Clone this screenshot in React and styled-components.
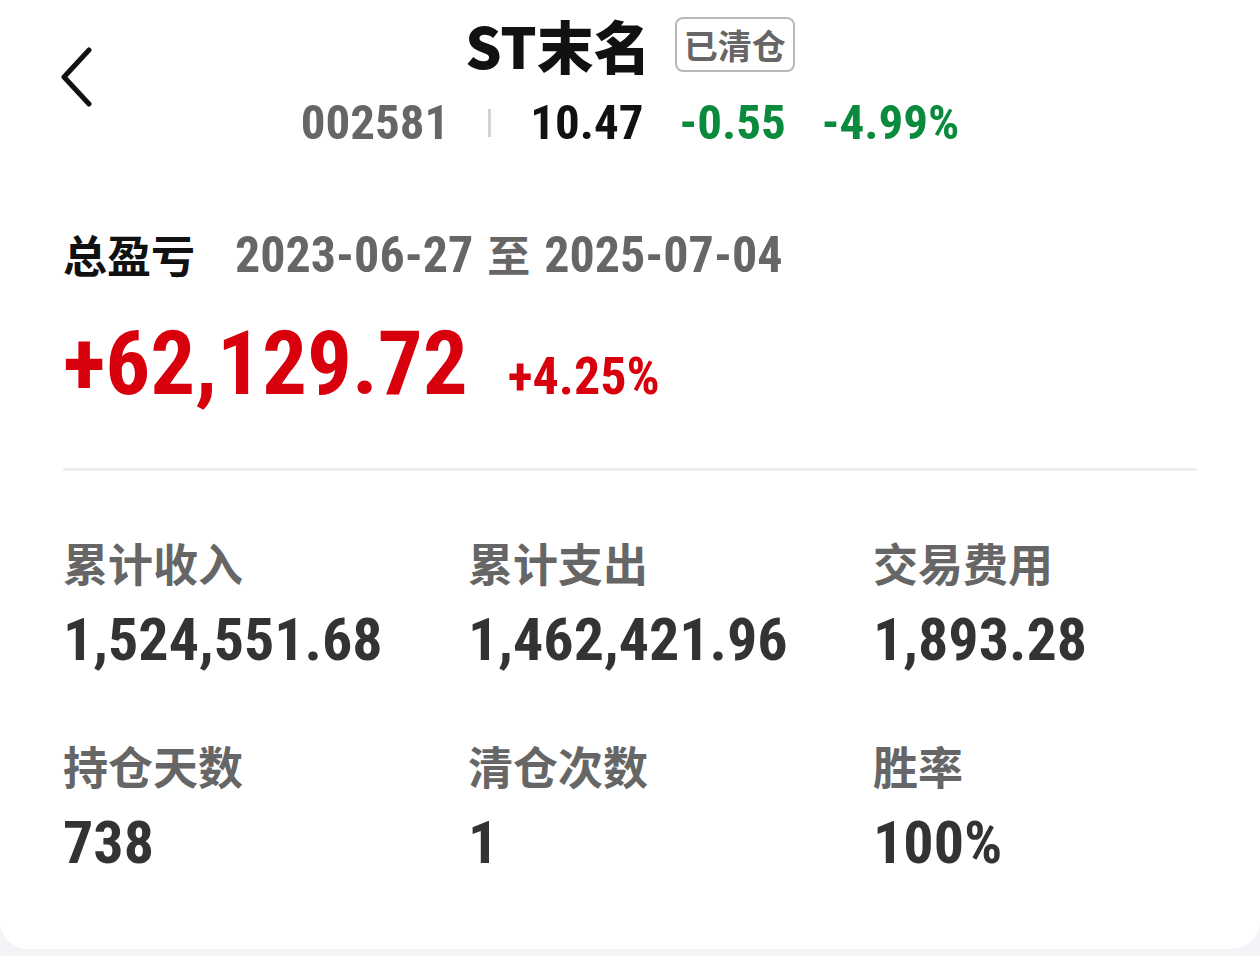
import React from "react";
import styled, { createGlobalStyle } from "styled-components";

const GlobalStyle = createGlobalStyle`
  html, body { margin: 0; padding: 0; background: #f3f4f8; }
  body { font-family: "Noto Sans CJK SC", "Noto Sans", sans-serif; }
`;

const NUM = `"Roboto Condensed", "Open Sans", "Noto Sans CJK SC", sans-serif`;
const CJK = `"Noto Sans CJK SC", "Noto Sans", sans-serif`;

const Page = styled.div`
  width: 1260px;
  height: 956px;
  background: #f3f4f8;
`;

const Card = styled.div`
  background: #ffffff;
  border-radius: 0 0 28px 28px;
  padding: 16px 63px 74px;
`;

const Header = styled.div`
  display: grid;
  grid-template-columns: 1fr auto 1fr;
  align-items: start;
`;

const BackButton = styled.button`
  border: 0;
  background: none;
  padding: 0;
  margin: 31px 0 0 -2px;
  width: 34px;
  height: 60px;
  justify-self: start;
  cursor: pointer;
`;

const TitleBlock = styled.div`
  display: flex;
  flex-direction: column;
  align-items: center;
`;

const TitleRow = styled.div`
  display: flex;
  align-items: center;
  gap: 24px;
  height: 56px;
`;

const Title = styled.h1`
  margin: 0;
  font-family: ${CJK};
  font-weight: 900;
  font-size: 57px;
  line-height: 56px;
  color: #111;
`;

const Badge = styled.span`
  box-sizing: border-box;
  height: 55px;
  padding: 0 7px;
  border: 2px solid #b8b8b8;
  border-radius: 8px;
  display: inline-flex;
  align-items: center;
  font-family: ${CJK};
  font-weight: 700;
  font-size: 34px;
  color: #666;
`;

const QuoteRow = styled.div`
  display: flex;
  align-items: center;
  margin-top: 25px;
  height: 52px;
`;

const Quote = styled.span`
  font-family: ${NUM};
  font-stretch: 75%;
  font-weight: 700;
  font-size: 49px;
  line-height: 52px;
  color: ${(p) => p.$color};
  margin-left: ${(p) => p.$ml || 0}px;
`;

const Sep = styled.span`
  width: 3px;
  height: 28px;
  background: #d4d4d4;
  margin: 0 39px;
`;

const SummaryHead = styled.div`
  display: flex;
  align-items: center;
  margin-top: 80px;
  height: 50px;
  gap: 40px;
`;

const SummaryLabel = styled.span`
  font-family: ${CJK};
  font-weight: 700;
  font-size: 44px;
  line-height: 50px;
  color: #111;
`;

const DateRange = styled.span`
  font-family: ${NUM};
  font-stretch: 75%;
  font-weight: 700;
  font-size: 50px;
  line-height: 50px;
  color: #666;
`;

const DateSep = styled.span`
  font-family: ${CJK};
  font-size: 43px;
  margin: 0 14px;
`;

const ProfitRow = styled.div`
  display: flex;
  align-items: baseline;
  margin-top: 40px;
  height: 90px;
  gap: 40px;
`;

const ProfitValue = styled.span`
  font-family: ${NUM};
  font-stretch: 75%;
  font-weight: 700;
  font-size: 89px;
  line-height: 90px;
  color: #d8000d;
`;

const ProfitPct = styled.span`
  font-family: ${NUM};
  font-stretch: 75%;
  font-weight: 700;
  font-size: 52px;
  color: #d8000d;
`;

const Divider = styled.hr`
  margin: 59px 0 0;
  border: 0;
  height: 3px;
  background: #eeeeee;
`;

const StatsGrid = styled.div`
  display: grid;
  grid-template-columns: repeat(3, 405px);
  row-gap: 69px;
  margin-top: 67px;
`;

const Stat = styled.div`
  display: flex;
  flex-direction: column;
  gap: 20px;
`;

const StatLabel = styled.span`
  font-family: ${CJK};
  font-weight: 700;
  font-size: 45px;
  line-height: 50px;
  color: #666;
`;

const StatValue = styled.span`
  font-family: ${NUM};
  font-stretch: 75%;
  font-weight: 700;
  font-size: 60px;
  line-height: 64px;
  color: #333;
`;

const stats = [
  { label: "累计收入", value: "1,524,551.68" },
  { label: "累计支出", value: "1,462,421.96" },
  { label: "交易费用", value: "1,893.28" },
  { label: "持仓天数", value: "738" },
  { label: "清仓次数", value: "1" },
  { label: "胜率", value: "100%" },
];

export default function App() {
  return (
    <Page>
      <GlobalStyle />
      <Card>
        <Header>
          <BackButton aria-label="返回">
            <svg width="34" height="60" viewBox="0 0 34 60">
              <polyline
                points="28,3 3,30 28,57"
                fill="none"
                stroke="#111"
                strokeWidth="5"
                strokeLinecap="round"
                strokeLinejoin="round"
              />
            </svg>
          </BackButton>
          <TitleBlock>
            <TitleRow>
              <Title>ST末名</Title>
              <Badge>已清仓</Badge>
            </TitleRow>
            <QuoteRow>
              <Quote $color="#666">002581</Quote>
              <Sep />
              <Quote $color="#111">10.47</Quote>
              <Quote $color="#0a8a3c" $ml={36}>-0.55</Quote>
              <Quote $color="#0a8a3c" $ml={36}>-4.99%</Quote>
            </QuoteRow>
          </TitleBlock>
          <div />
        </Header>

        <SummaryHead>
          <SummaryLabel>总盈亏</SummaryLabel>
          <DateRange>
            2023-06-27<DateSep>至</DateSep>2025-07-04
          </DateRange>
        </SummaryHead>

        <ProfitRow>
          <ProfitValue>+62,129.72</ProfitValue>
          <ProfitPct>+4.25%</ProfitPct>
        </ProfitRow>

        <Divider />

        <StatsGrid>
          {stats.map((s) => (
            <Stat key={s.label}>
              <StatLabel>{s.label}</StatLabel>
              <StatValue>{s.value}</StatValue>
            </Stat>
          ))}
        </StatsGrid>
      </Card>
    </Page>
  );
}
